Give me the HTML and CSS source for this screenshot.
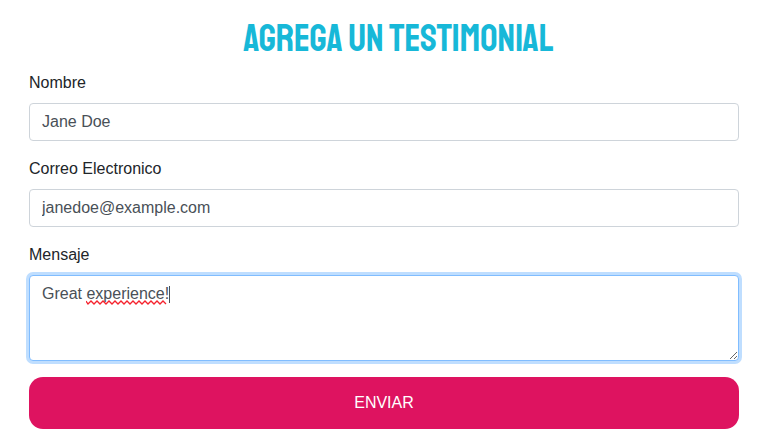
FILE: index.html
```html
<!DOCTYPE html>
<html lang="es">
<head>
<meta charset="utf-8">
<meta name="viewport" content="width=device-width, initial-scale=1">
<title>Agrega un testimonial</title>
<link rel="stylesheet" href="styles.css">
</head>
<body>
<main class="testimonial">
  <h2 class="title">AGREGA UN TESTIMONIAL</h2>
  <form class="form">
    <div class="field">
      <label for="nombre">Nombre</label>
      <input class="control" id="nombre" type="text" value="Jane Doe">
    </div>
    <div class="field">
      <label for="correo">Correo Electronico</label>
      <input class="control" id="correo" type="email" value="janedoe@example.com">
    </div>
    <div class="field">
      <label for="mensaje">Mensaje</label>
      <div class="message">
        <textarea class="control active" id="mensaje" rows="3" spellcheck="false">Great experience!</textarea>
        <svg class="spelling" width="84" height="22" viewBox="0 0 84 22" aria-hidden="true">
          <path class="wave" d="M0 16l2 3 3-3 3 3 3-3 3 3 3-3 3 3 3-3 3 3 3-3 3 3 3-3 3 3 3-3 3 3 3-3 3 3 3-3 3 3 3-3 3 3 3-3 3 3 3-3 3 3 3-3 3 3"/>
          <path class="caret" d="M83.5 1v17"/>
        </svg>
      </div>
    </div>
    <button class="submit" type="submit">ENVIAR</button>
  </form>
</main>
</body>
</html>
```
FILE: styles.css
```css
* {
  box-sizing: border-box;
}

body {
  margin: 0;
  background: #fff;
  color: #212529;
  font: 16px/24px "Liberation Sans", Arial, sans-serif;
}

.testimonial {
  padding: 15px 20px 17px 29px;
}

.title {
  margin: 0 0 8px;
  padding-left: 29px;
  color: #17b8d8;
  font: 500 38px/48px "Staatliches", "Bebas Neue", "Liberation Sans", sans-serif;
  text-align: center;
}

.form {
  display: flex;
  flex-direction: column;
  gap: 16px;
}

.field {
  display: flex;
  flex-direction: column;
  gap: 8px;
}

.control {
  display: block;
  width: 100%;
  margin: 0;
  padding: 6px 12px;
  border: 1px solid #ced4da;
  border-radius: 4px;
  outline: 0;
  background: #fff;
  color: #495057;
  font: inherit;
}

.message {
  position: relative;
}

.active,
.control:focus {
  border-color: #80bdff;
  box-shadow: 0 0 0 3px #bfdeff;
}

textarea.control {
  resize: vertical;
}

.spelling {
  position: absolute;
  top: 10px;
  left: 57px;
  fill: none;
  pointer-events: none;
}

.wave {
  stroke: #f5222d;
  stroke-width: 1.3;
}

.caret {
  stroke: #495057;
}

.submit {
  padding: 14px 12px;
  border: 0;
  border-radius: 14px;
  background: #de1360;
  color: #fff;
  font: inherit;
  cursor: pointer;
}
```
